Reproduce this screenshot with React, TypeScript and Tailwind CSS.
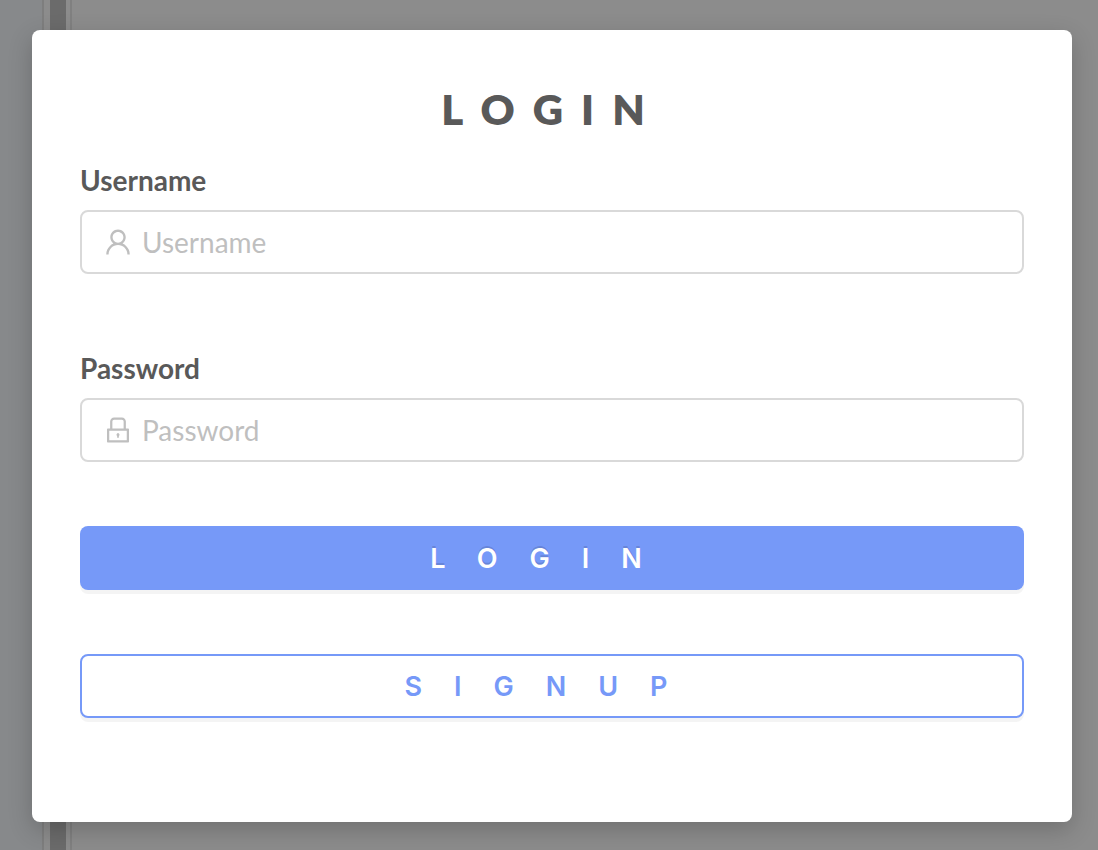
import type { ReactNode } from "react";
import { AiOutlineLock, AiOutlineUser } from "react-icons/ai";

type FieldProps = {
  id: string;
  label: string;
  type: string;
  icon: ReactNode;
};

function Field({ id, label, type, icon }: FieldProps) {
  return (
    <div>
      <label htmlFor={id} className="block text-[28px] leading-9 font-bold text-[#595959]">
        {label}
      </label>
      <div className="mt-3 flex h-16 items-center gap-2 rounded-lg border-2 border-[#d9d9d9] bg-white px-5 text-[32px] text-[#bfbfbf]">
        {icon}
        <input
          id={id}
          type={type}
          placeholder={label}
          className="min-w-0 flex-1 bg-transparent text-[28px] text-[#595959] outline-none placeholder:text-[#bfbfbf]"
        />
      </div>
    </div>
  );
}

function Backdrop() {
  return (
    <div aria-hidden="true" className="absolute inset-0 flex bg-[#8c8c8c]">
      <div className="w-11 border-r-2 border-[#7e7e7e] bg-[#87898b]" />
      <div className="ml-1.5 w-4 bg-[#6b6b6b]" />
      <div className="ml-1 w-0.5 bg-[#808080]" />
    </div>
  );
}

export default function App() {
  return (
    <main className="relative min-h-screen pt-[30px] pr-[26px] pb-7 pl-8 font-['Lato',sans-serif]">
      <Backdrop />
      <form
        role="dialog"
        aria-labelledby="login-title"
        onSubmit={(event) => event.preventDefault()}
        className="relative rounded-lg bg-white px-12 pt-12 pb-[104px] shadow-[0_8px_24px_rgba(0,0,0,0.2)]"
      >
        <h1
          id="login-title"
          className="text-center text-[42px] leading-[62px] font-extrabold tracking-[18px] text-[#595959]"
        >
          LOGIN
        </h1>
        <div className="mt-[22px] flex flex-col gap-[76px]">
          <Field id="username" label="Username" type="text" icon={<AiOutlineUser />} />
          <Field id="password" label="Password" type="password" icon={<AiOutlineLock />} />
        </div>
        <div className="mt-16 flex flex-col gap-16 font-['Inter',sans-serif] text-[27px] leading-9 font-semibold tracking-[32px]">
          <button
            type="submit"
            className="h-16 rounded-lg bg-[#7699f8] pt-0.5 text-white shadow-[0_4px_0_rgba(0,0,0,0.045)] [text-shadow:0_-2px_0_rgba(0,0,0,0.12)]"
          >
            LOGIN
          </button>
          <button
            type="button"
            className="h-16 rounded-lg border-2 border-[#7699f8] bg-white pt-0.5 text-[#7699f8] shadow-[0_4px_0_rgba(0,0,0,0.045)]"
          >
            SIGNUP
          </button>
        </div>
      </form>
    </main>
  );
}
